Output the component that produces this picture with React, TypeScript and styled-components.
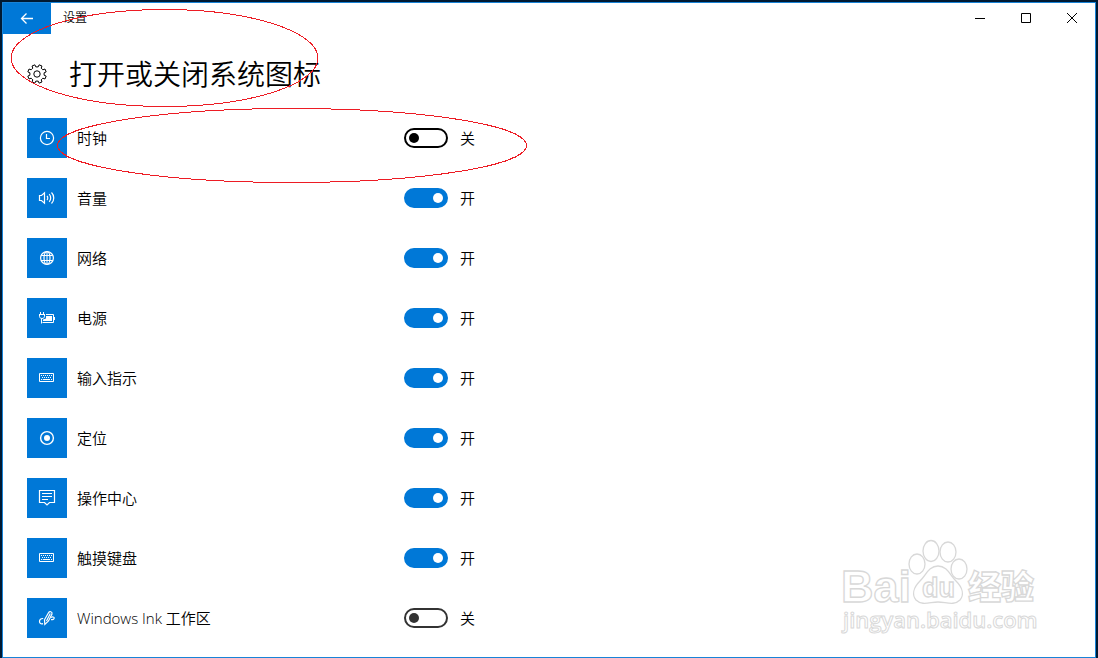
import React, { useState } from "react";
import styled, { createGlobalStyle } from "styled-components";

const GlobalStyle = createGlobalStyle`
  *, *::before, *::after { box-sizing: border-box; }
  body {
    margin: 0;
    background: #001a33;
    color: #000;
    font-family: "Open Sans", "Noto Sans CJK SC", sans-serif;
  }
`;

const Desktop = styled.div`
  min-height: 100vh;
  padding: 2px 2px 0 2px;
  background: #001a33;
  display: flex;
`;

const Window = styled.div`
  position: relative;
  flex: 1;
  min-width: 0;
  background: #fff;
  border: 1px solid #1883d7;
`;

const TitleBar = styled.header`
  display: flex;
  height: 31px;
`;

const BackButton = styled.button`
  width: 48px;
  height: 31px;
  padding: 0;
  border: 0;
  background: #0078d7;
  color: #fff;
  display: grid;
  place-items: center;
`;

const WindowTitle = styled.span`
  flex: 1;
  padding-left: 12px;
  font-size: 12px;
  font-weight: 350;
  line-height: 30px;
`;

const CaptionButton = styled.button`
  width: 46px;
  height: 30px;
  padding: 0;
  border: 0;
  background: transparent;
  display: grid;
  place-items: center;
`;

const Page = styled.main`
  padding: 20px 24px 19px;
`;

const Heading = styled.div`
  display: flex;
  align-items: center;
  gap: 22px;
  height: 40px;
`;

const HeadingText = styled.h1`
  margin: 0;
  font-family: "Noto Sans CJK SC", sans-serif;
  font-size: 28px;
  font-weight: 350;
  line-height: 38px;
  padding-bottom: 2px;
`;

const List = styled.ul`
  list-style: none;
  margin: 24px 0 0;
  padding: 0;
  display: grid;
  gap: 20px;
`;

const Row = styled.li`
  display: grid;
  grid-template-columns: 40px 317px 44px auto;
  column-gap: 10px;
  align-items: center;
  justify-content: start;
  height: 40px;
`;

const Tile = styled.span`
  width: 40px;
  height: 40px;
  background: #0078d7;
  color: #fff;
  display: grid;
  place-items: center;
`;

const Name = styled.label`
  font-size: 15px;
  font-weight: 350;
  line-height: 20px;
`;

const Status = styled.span`
  padding-left: 2px;
  font-size: 15px;
  font-weight: 350;
  line-height: 20px;
`;

const Switch = styled.input<{ $ink: string }>`
  appearance: none;
  margin: 0;
  width: 44px;
  height: 20px;
  border: 2px solid ${(p) => p.$ink};
  border-radius: 10px;
  background: #fff;
  display: flex;
  align-items: center;
  padding: 0 3px;

  &::before {
    content: "";
    width: 10px;
    height: 10px;
    border-radius: 50%;
    background: ${(p) => p.$ink};
  }

  &:checked {
    justify-content: flex-end;
    border-color: #0078d7;
    background: #0078d7;
  }

  &:checked::before {
    background: #fff;
  }
`;

const Marks = styled.svg`
  position: absolute;
  top: -3px;
  left: -3px;
  pointer-events: none;
`;

const Watermark = styled.svg`
  position: absolute;
  right: 52px;
  bottom: 15px;
  pointer-events: none;
`;

const Icon = ({ size = 18, children }: { size?: number; children: React.ReactNode }) => (
  <svg width={size} height={size} viewBox={`0 0 ${size} ${size}`} fill="none" stroke="currentColor" strokeWidth="1.2" aria-hidden="true">
    {children}
  </svg>
);

const ClockIcon = () => (
  <Icon>
    <circle cx="9" cy="9" r="6.6" />
    <path d="M8.5 5v4.5H12" />
  </Icon>
);

const VolumeIcon = () => (
  <Icon>
    <path d="M1.5 6.5H3.5L6.5 3.8V14.2L3.5 11.5H1.5Z" />
    <path d="M9 7c1 1 1 3 0 4M11.2 5.2c2 2 2 5.6 0 7.6M13.5 3.5c3 3 3 8 0 11" />
  </Icon>
);

const GlobeIcon = () => (
  <Icon>
    <circle cx="9" cy="9" r="6.4" />
    <ellipse cx="9" cy="9" rx="3" ry="6.4" />
    <path d="M9 2.6v12.8M3.2 6.5h11.6M3.2 11.5h11.6" strokeWidth="1" />
  </Icon>
);

const PowerIcon = () => (
  <Icon>
    <path d="M2.5 3v2.5M5.5 3v2.5M1 5.5h6M1.5 6v1.5c0 1 1 2 2.5 2s2.5-1 2.5-2V6M3.5 9.5v5" strokeWidth="1" />
    <path d="M8 5.5h7.5v8h-11M16.5 8v3" strokeWidth="1" />
    <path d="M8 7H14v5H5v-1.5L8 9.5Z" fill="currentColor" stroke="none" />
  </Icon>
);

const KeyboardIcon = () => (
  <Icon>
    <path d="M1.5 4.5h14v8h-14z" strokeWidth="1" />
    <path d="M3 6.5h11M4 8.5h10" strokeWidth="1" strokeDasharray="1 1" />
    <path d="M3 10.5h1.2M5 10.5h7M13 10.5h1" strokeWidth="1" />
  </Icon>
);

const LocationIcon = () => (
  <Icon>
    <circle cx="9" cy="9" r="6.4" strokeWidth="1.4" />
    <circle cx="9" cy="9" r="3" fill="currentColor" stroke="none" />
  </Icon>
);

const ActionCenterIcon = () => (
  <Icon>
    <path d="M1.5 1.5h15v12h-5L9 16l-2.5-2.5h-5z" />
    <path d="M4 4.5h10M4 7.5h10M4 10.5h6" strokeWidth="1" />
  </Icon>
);

const InkIcon = () => (
  <Icon>
    <path d="M5.2 9.5C2.8 9.3 1.5 10.8 1.5 12.5S3 15.2 5 14.6" />
    <path d="M6.8 15.5L6.5 10.8L10.5 3.8C11.5 2 14.5 2.5 14 5L10.5 12Z" />
    <path d="M12.3 4.5L8.5 12M13 8.5c1.5-1 3.2-.5 3.2.6s-1.4 1.7-3.2 1.6" />
  </Icon>
);

const gearPath = (() => {
  const points: string[] = [];
  const teeth = 8;
  for (let i = 0; i < teeth; i++) {
    const ring: [number, number][] = [[-0.29, 7.2], [-0.21, 9.4], [0.21, 9.4], [0.29, 7.2]];
    ring.forEach(([offset, radius]) => {
      const angle = ((i + 0.5 + offset) / teeth) * Math.PI * 2;
      points.push(`${(10 + radius * Math.sin(angle)).toFixed(2)} ${(10 - radius * Math.cos(angle)).toFixed(2)}`);
    });
  }
  return `M${points.join("L")}Z`;
})();

const GearIcon = () => (
  <Icon size={20}>
    <path d={gearPath} strokeWidth="1" strokeLinejoin="round" />
    <circle cx="10" cy="10" r="3.2" strokeWidth="1" />
  </Icon>
);

const items = [
  { id: "clock", name: "时钟", icon: ClockIcon, on: false, ink: "#000" },
  { id: "volume", name: "音量", icon: VolumeIcon, on: true },
  { id: "network", name: "网络", icon: GlobeIcon, on: true },
  { id: "power", name: "电源", icon: PowerIcon, on: true },
  { id: "input", name: "输入指示", icon: KeyboardIcon, on: true },
  { id: "location", name: "定位", icon: LocationIcon, on: true },
  { id: "action", name: "操作中心", icon: ActionCenterIcon, on: true },
  { id: "touch", name: "触摸键盘", icon: KeyboardIcon, on: true },
  { id: "ink", name: "Windows Ink 工作区", icon: InkIcon, on: false },
];

export default function App() {
  const [state, setState] = useState<Record<string, boolean>>(
    Object.fromEntries(items.map((i) => [i.id, i.on]))
  );

  return (
    <>
      <GlobalStyle />
      <Desktop>
        <Window>
          <TitleBar>
            <BackButton aria-label="返回">
              <svg width="14" height="12" viewBox="0 0 14 12" fill="none" stroke="currentColor" strokeWidth="1.3">
                <path d="M13 5.5H1.5M6.5.5l-5 5 5 5" />
              </svg>
            </BackButton>
            <WindowTitle>设置</WindowTitle>
            <CaptionButton aria-label="最小化">
              <svg width="10" height="10" stroke="#000"><path d="M0 5.5h10" /></svg>
            </CaptionButton>
            <CaptionButton aria-label="最大化">
              <svg width="10" height="10" fill="none" stroke="#000"><path d="M.5.5h9v9h-9z" /></svg>
            </CaptionButton>
            <CaptionButton aria-label="关闭">
              <svg width="10" height="10" stroke="#000"><path d="M0 0l10 10M10 0L0 10" /></svg>
            </CaptionButton>
          </TitleBar>

          <Page>
            <Heading>
              <GearIcon />
              <HeadingText>打开或关闭系统图标</HeadingText>
            </Heading>
            <List>
              {items.map(({ id, name, icon: ItemIcon, ink }) => (
                <Row key={id}>
                  <Tile><ItemIcon /></Tile>
                  <Name htmlFor={id}>{name}</Name>
                  <Switch
                    id={id}
                    type="checkbox"
                    role="switch"
                    $ink={ink ?? "#333"}
                    checked={state[id]}
                    onChange={(e) => setState({ ...state, [id]: e.target.checked })}
                  />
                  <Status>{state[id] ? "开" : "关"}</Status>
                </Row>
              ))}
            </List>
          </Page>

          <Marks width="540" height="190" fill="none" stroke="#ed1c24" shapeRendering="crispEdges" aria-hidden="true">
            <ellipse cx="164.5" cy="58" rx="153.5" ry="48.5" />
            <ellipse cx="292" cy="145.5" rx="234.5" ry="37" />
          </Marks>

          <Watermark width="204" height="104" viewBox="0 0 204 104" fill="#fff" stroke="#d8d8d8" strokeWidth="1.3">
            <text x="2" y="64" fontFamily='"Liberation Sans", sans-serif' fontSize="45" fontWeight="700">Bai</text>
            <path d="M99 28c-9 0-12 9-18 15c-7 7-8 14-4 19c6 6 14 2 22 2s16 4 22-2c4-5 3-12-4-19c-6-6-9-15-18-15z" />
            <ellipse cx="78" cy="26" rx="8" ry="10" />
            <ellipse cx="92" cy="13" rx="8" ry="10.5" />
            <ellipse cx="109" cy="14" rx="8" ry="10" />
            <ellipse cx="120" cy="31" rx="8" ry="10" />
            <text x="83" y="59" fontFamily='"Liberation Sans", sans-serif' fontSize="27" fontWeight="700">du</text>
            <text x="129" y="61" fontFamily='"Noto Sans CJK SC", sans-serif' fontSize="33" fontWeight="900">经验</text>
            <text x="4" y="90" fontFamily='"Open Sans", sans-serif' fontSize="22" fontWeight="600" strokeWidth="1">jingyan.baidu.com</text>
          </Watermark>
        </Window>
      </Desktop>
    </>
  );
}
